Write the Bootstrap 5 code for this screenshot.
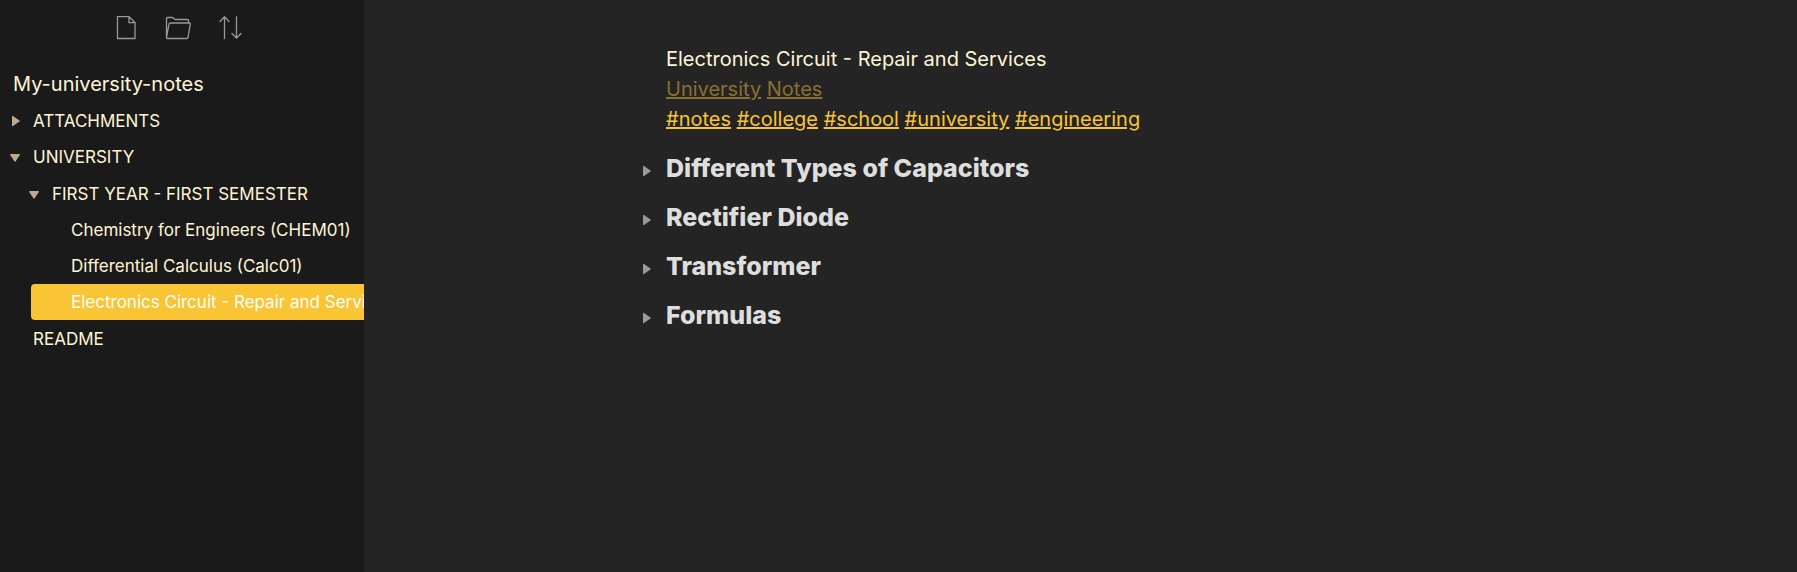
<!DOCTYPE html>
<html lang="en">
<head>
<meta charset="utf-8">
<meta name="viewport" content="width=device-width, initial-scale=1">
<title>Electronics Circuit - Repair and Services</title>
<link href="https://cdn.jsdelivr.net/npm/bootstrap@5.3.0/dist/css/bootstrap.min.css" rel="stylesheet">
<style>
  body { background: #242424; color: #fff5d6; font-family: Inter, "Liberation Sans", sans-serif; font-size: 20px; line-height: 30px; }
  .sidebar { width: 364px; background: #1a1a1a; }
  .tool { color: #999; line-height: 0; }
  .vault { padding: 29px 13px 4px; font-size: 20px; }
  .tree { font-size: 17px; line-height: 36px; }
  .tree ul { margin: 1px 0 1px 19px; }
  .tree-item { color: inherit; font-size: 17px; line-height: 36px; padding: 0 0 0 33px; border-radius: 4px 0 0 4px; }
  .tree-item.folder { padding-left: 8px; }
  .tree ul ul { margin: 0 0 0 12px; }
  .tree ul ul .tree-item { padding-left: 40px; }
  .tree-item.selected { background: #f9c535; color: #fff; }
  .arrow { width: 14px; height: 14px; margin-right: 11px; fill: #bda98c; }
  .note { max-width: 829px; padding-top: 44px; }
  .note a { color: #f9c535; text-underline-offset: auto; }
  .note a.unresolved { color: #8a7030; }
  .sections { padding-top: 10px; }
  .section-title { font-size: 25px; line-height: 49px; font-weight: 800; color: #dedede; }
  .fold { width: 26px; margin-left: -26px; line-height: 0; fill: #999; padding-top: 4px; }
</style>
</head>
<body>
<div class="d-flex min-vh-100">
  <aside class="sidebar flex-shrink-0 overflow-hidden">
    <div class="d-flex justify-content-center gap-4 pt-3 pe-2">
      <button class="tool btn btn-link border-0 p-0" type="button" aria-label="New note">
        <svg width="28" height="24" viewBox="0 0 28 24" fill="none" stroke="currentColor" stroke-width="1.3"><path d="M5.5.7H17L23 6.600V22.500H5.500zM17 .7V6.600H23"/></svg>
      </button>
      <button class="tool btn btn-link border-0 p-0" type="button" aria-label="New folder">
        <svg width="28" height="24" viewBox="0 0 28 24" fill="none" stroke="currentColor" stroke-width="1.3" stroke-linejoin="round"><path d="M2.500 21.500V2.500Q2.500 1.500 3.500 1.500H8.500L11 3.500H23.500Q24.500 3.500 24.500 4.500V7M2.500 21.500L5 8Q5.200 7 6.200 7H25.500Q26.500 7 26.300 8L24 21.500Q23.700 22.500 22.700 22.500H3.300Q2.500 22.500 2.500 21.500"/></svg>
      </button>
      <button class="tool btn btn-link border-0 p-0" type="button" aria-label="Change sort order">
        <svg width="28" height="24" viewBox="0 0 28 24" fill="none" stroke="currentColor" stroke-width="1.300" stroke-linecap="round"><path d="M8.500 22.500V.8M4 5.500L8.500.8L13 5.500M20.500.8V22M16 17.500L20.500 22L25 17.500"/></svg>
      </button>
    </div>
    <div class="vault">My-university-notes</div>
    <nav class="tree text-nowrap" aria-label="Files">
      <button class="tree-item folder btn border-0 d-flex align-items-center w-100" type="button" aria-expanded="false"><svg class="arrow" viewBox="0 0 14 14"><path d="M4 2.500Q4 1.500 5 2L11.500 6.500Q12 7 11.500 7.500L5 12Q4 12.500 4 11.500z"/></svg>ATTACHMENTS</button>
      <button class="tree-item folder btn border-0 d-flex align-items-center w-100" type="button" aria-expanded="true"><svg class="arrow" viewBox="0 0 14 14"><path d="M2.700 4H11.300Q12.300 4 11.800 5L7.500 11.500Q7 12 6.500 11.500L2.200 5Q1.700 4 2.700 4"/></svg>UNIVERSITY</button>
      <ul class="list-unstyled">
        <li>
          <button class="tree-item folder btn border-0 d-flex align-items-center w-100" type="button" aria-expanded="true"><svg class="arrow" viewBox="0 0 14 14"><path d="M2.700 4H11.300Q12.300 4 11.800 5L7.500 11.500Q7 12 6.500 11.500L2.200 5Q1.700 4 2.700 4"/></svg>FIRST YEAR - FIRST SEMESTER</button>
          <ul class="list-unstyled">
            <li><a class="tree-item d-block text-decoration-none" href="#chem">Chemistry for Engineers (CHEM01)</a></li>
            <li><a class="tree-item d-block text-decoration-none" href="#calc">Differential Calculus (Calc01)</a></li>
            <li><a class="tree-item selected d-block text-decoration-none" href="#circuit" aria-current="page">Electronics Circuit - Repair and Services</a></li>
          </ul>
        </li>
      </ul>
      <a class="tree-item d-block text-decoration-none" href="#readme">README</a>
    </nav>
  </aside>
  <main class="flex-grow-1">
    <article class="note mx-auto">
      <div>Electronics Circuit - Repair and Services</div>
      <div><a class="unresolved" href="#u">University</a> <a class="unresolved" href="#n">Notes</a></div>
      <div><a href="#notes">#notes</a> <a href="#college">#college</a> <a href="#school">#school</a> <a href="#university">#university</a> <a href="#engineering">#engineering</a></div>
      <div class="sections">
        <h2 class="section-title d-flex align-items-center m-0"><button class="fold btn border-0 px-0 pb-0 text-start" type="button" aria-label="Expand section"><svg width="14" height="14" viewBox="0 0 14 14"><path d="M3 2.500Q3 1.500 4 2L10.500 6.500Q11 7 10.500 7.500L4 12Q3 12.500 3 11.500z"/></svg></button>Different Types of Capacitors</h2>
        <h2 class="section-title d-flex align-items-center m-0"><button class="fold btn border-0 px-0 pb-0 text-start" type="button" aria-label="Expand section"><svg width="14" height="14" viewBox="0 0 14 14"><path d="M3 2.500Q3 1.500 4 2L10.500 6.500Q11 7 10.500 7.500L4 12Q3 12.500 3 11.500z"/></svg></button>Rectifier Diode</h2>
        <h2 class="section-title d-flex align-items-center m-0"><button class="fold btn border-0 px-0 pb-0 text-start" type="button" aria-label="Expand section"><svg width="14" height="14" viewBox="0 0 14 14"><path d="M3 2.500Q3 1.500 4 2L10.500 6.500Q11 7 10.500 7.500L4 12Q3 12.500 3 11.500z"/></svg></button>Transformer</h2>
        <h2 class="section-title d-flex align-items-center m-0"><button class="fold btn border-0 px-0 pb-0 text-start" type="button" aria-label="Expand section"><svg width="14" height="14" viewBox="0 0 14 14"><path d="M3 2.500Q3 1.500 4 2L10.500 6.500Q11 7 10.500 7.500L4 12Q3 12.500 3 11.500z"/></svg></button>Formulas</h2>
      </div>
    </article>
  </main>
</div>
<script src="https://cdn.jsdelivr.net/npm/bootstrap@5.3.0/dist/js/bootstrap.bundle.min.js"></script>
</body>
</html>
